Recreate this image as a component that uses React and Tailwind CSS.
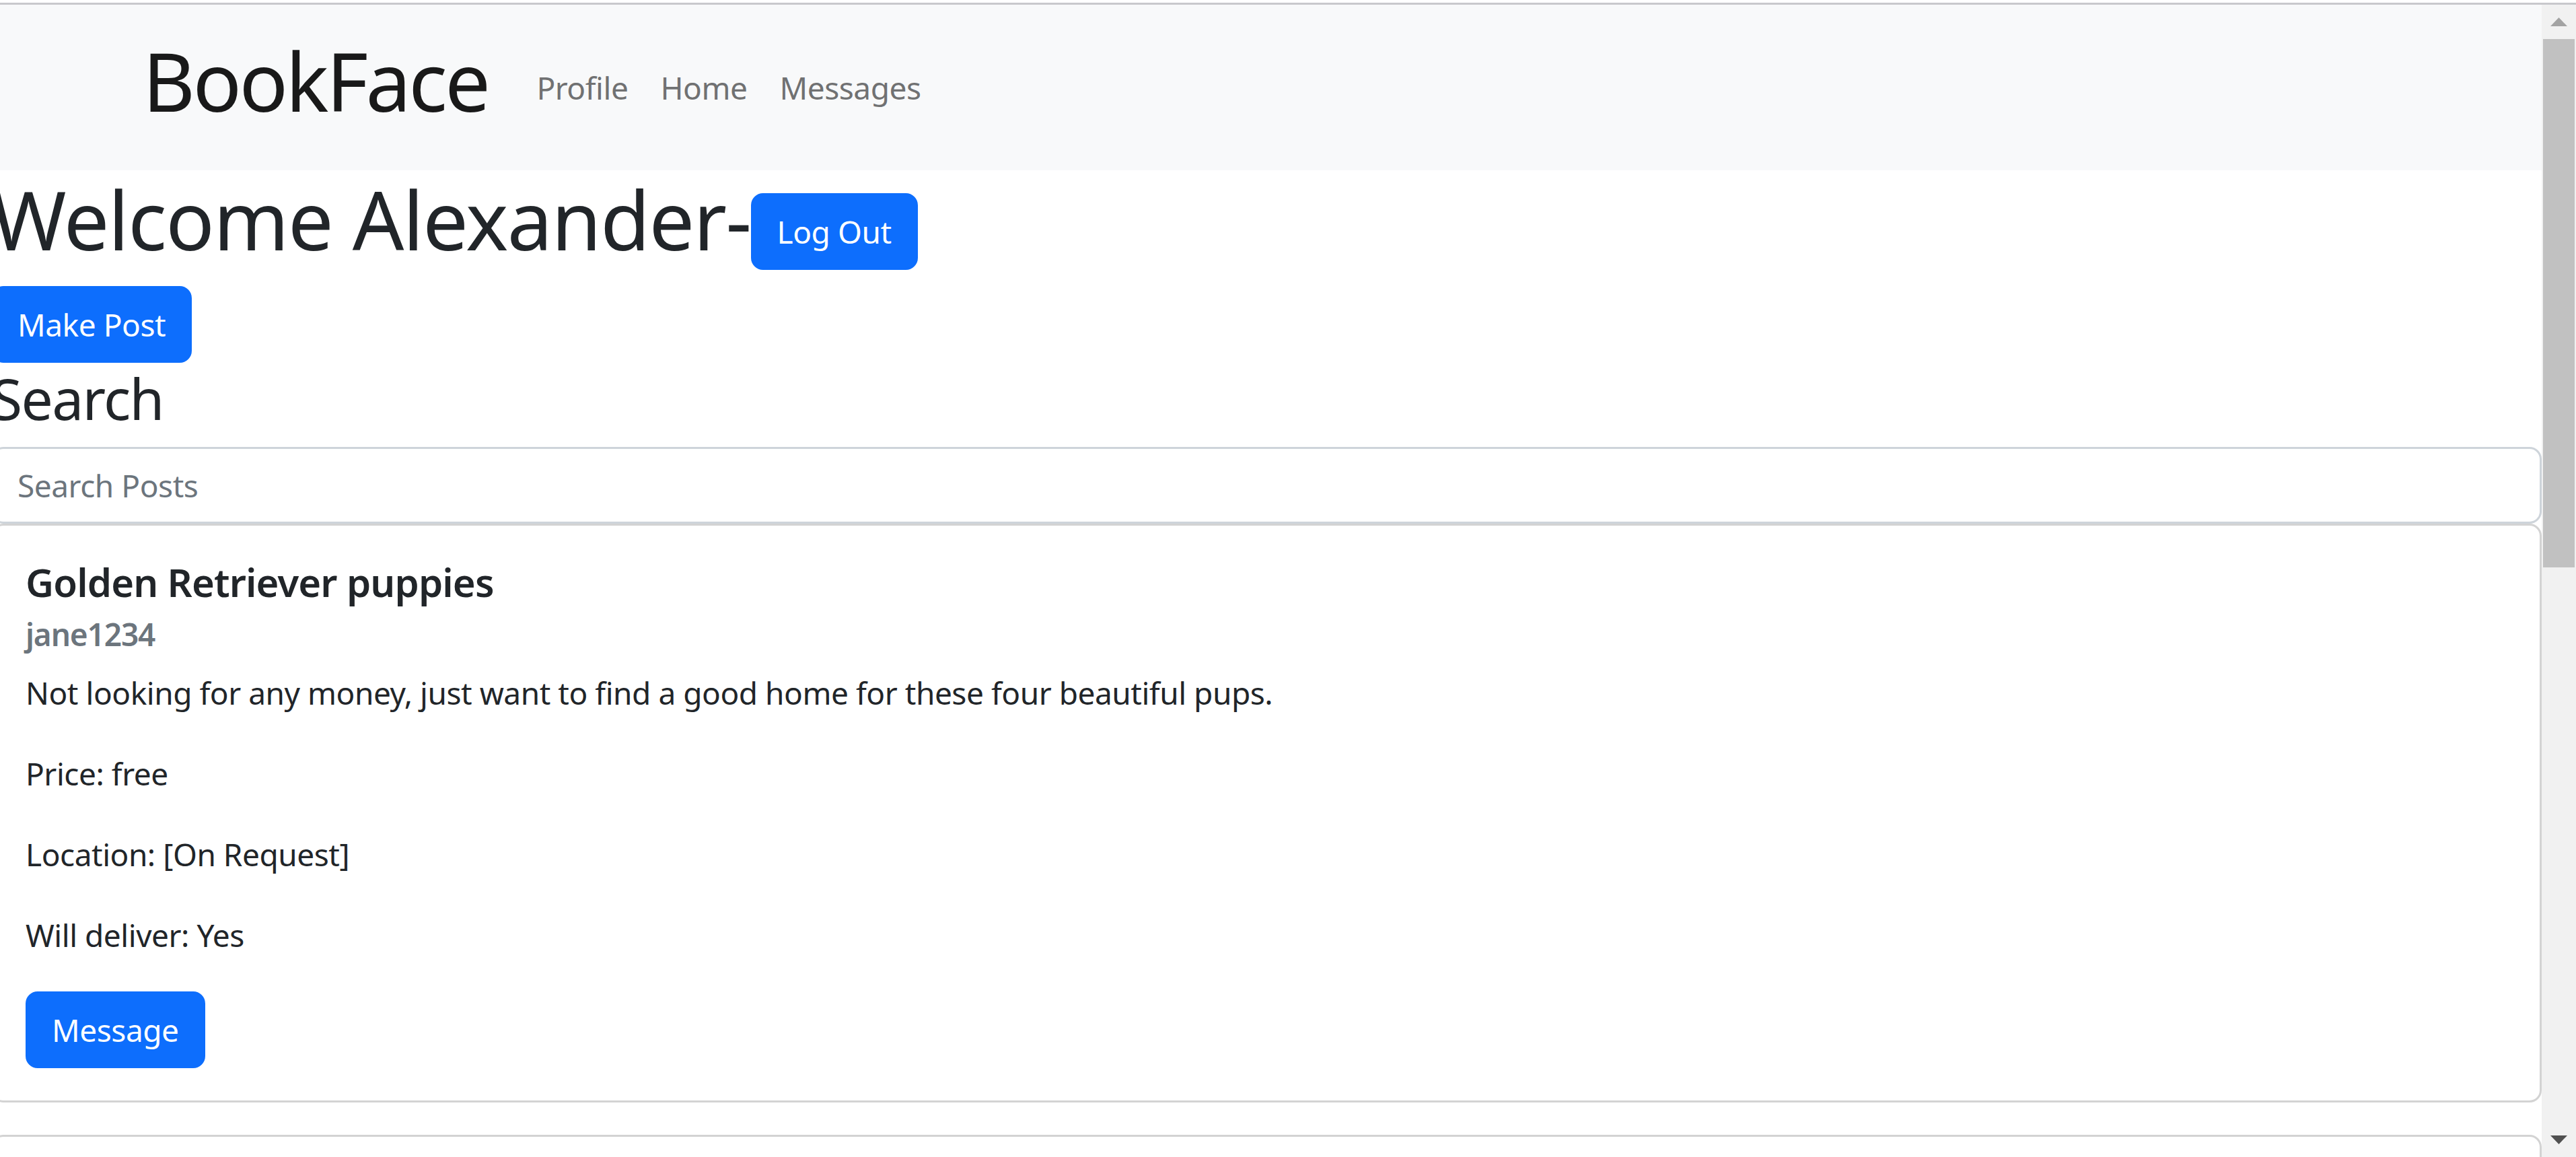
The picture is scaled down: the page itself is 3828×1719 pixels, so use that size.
const navLinks = ['Profile', 'Home', 'Messages']

const post = {
  title: 'Golden Retriever puppies',
  user: 'jane1234',
  body: 'Not looking for any money, just want to find a good home for these four beautiful pups.',
  price: 'free',
  location: '[On Request]',
  deliver: 'Yes',
}

function Scrollbar() {
  return (
    <div className="w-[51px] shrink-0 bg-[#f1f1f1] flex flex-col">
      <div className="h-[51px] flex items-center justify-center">
        <svg width="25" height="13" viewBox="0 0 25 13">
          <polygon points="12.5,0 25,13 0,13" fill="#a3a3a3" />
        </svg>
      </div>
      <div className="mx-[2px] h-[785px] bg-[#c1c1c1]" />
      <div className="flex-1" />
      <div className="h-[51px] flex items-center justify-center">
        <svg width="25" height="13" viewBox="0 0 25 13">
          <polygon points="0,0 25,0 12.5,13" fill="#505050" />
        </svg>
      </div>
    </div>
  )
}

function BlueButton({ children, className = '' }) {
  return (
    <button className={`h-[114px] shrink-0 rounded-[18px] border-[3px] border-[#0d6efd] bg-[#0d6efd] px-[36px] text-[46px] leading-[72px] text-white tracking-[-0.01em] ${className}`}>
      {children}
    </button>
  )
}

export default function App() {
  return (
    <div className="w-[3828px] h-[1719px] overflow-hidden flex flex-col bg-white font-['Noto_Sans',sans-serif] text-[#212529]">
      <div className="h-[4px] shrink-0 bg-white" />
      <div className="h-[3px] shrink-0 bg-[#c8c8cc]" />
      <div className="flex flex-1 min-h-0">
        <main className="flex-1 min-w-0 overflow-hidden">
          <nav className="h-[246px] bg-[#f8f9fa] flex items-start pl-[212px]">
            <h1 className="mt-[41px] mr-[48px] text-[120px] leading-[144px] text-[#191919] tracking-[-0.03em]">
              BookFace
            </h1>
            <ul className="mt-[87px] flex">
              {navLinks.map((link) => (
                <li key={link} className="px-[24px] text-[46px] leading-[72px] text-[#707172] tracking-[-0.01em]">
                  {link}
                </li>
              ))}
            </ul>
          </nav>

          <div className="-ml-[13px] w-[calc(100%+13px)]">
            <div className="flex items-start">
              <h1 className="pt-[1px] text-[120px] leading-[144px] tracking-[-0.013em]">Welcome Alexander-</h1>
              <BlueButton className="mt-[34px]">Log Out</BlueButton>
            </div>
            <BlueButton className="mt-[24px] block">Make Post</BlueButton>
            <h3 className="mt-[2px] mb-[22px] text-[84px] leading-[101px] tracking-[-0.02em]">Search</h3>
            <input
              type="text"
              placeholder="Search Posts"
              className="block w-full h-[114px] rounded-[18px] border-[3px] border-[#ced4da] px-[36px] text-[46px] tracking-[-0.01em] outline-none placeholder:text-[#6c757d]"
            />

            <div className="rounded-[18px] border-[3px] border-[#d3d3d3] p-[48px]">
              <h5 className="text-[58px] leading-[72px] font-semibold tracking-[-0.015em]">{post.title}</h5>
              <h6 className="mt-[12px] text-[46px] leading-[58px] font-semibold text-[#6c757d] tracking-[-0.025em]">{post.user}</h6>
              <div className="mt-[22px] flex flex-col gap-[48px] text-[46px] leading-[72px] tracking-[-0.01em]">
                <p>{post.body}</p>
                <p>Price: {post.price}</p>
                <p>Location: {post.location}</p>
                <p>Will deliver: {post.deliver}</p>
              </div>
              <BlueButton className="mt-[48px]">Message</BlueButton>
            </div>

            <div className="mt-[48px] h-[300px] rounded-[18px] border-[3px] border-[#d3d3d3]" />
          </div>
        </main>
        <Scrollbar />
      </div>
    </div>
  )
}
